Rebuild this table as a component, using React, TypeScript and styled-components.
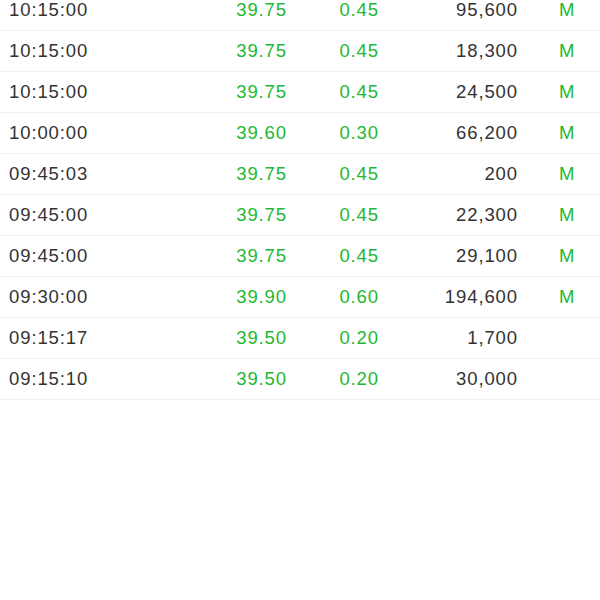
import React from "react";
import styled, { createGlobalStyle } from "styled-components";

const Global = createGlobalStyle`
  html, body { margin: 0; padding: 0; background: #ffffff; }
  body { font-family: "Liberation Sans", Arial, sans-serif; overflow: hidden; }
`;

const List = styled.div`
  display: flex;
  flex-direction: column;
  margin-top: -10px;
`;

const Row = styled.div`
  display: grid;
  grid-template-columns: 200px 87px 92px 139px 1fr;
  align-items: center;
  height: 40px;
  border-bottom: 1px solid #f0f0f0;
  font-size: 18.5px;
  letter-spacing: 0.9px;
`;

const Time = styled.span`
  padding-left: 9px;
  color: #333333;
`;

const Num = styled.span<{ $green?: boolean }>`
  text-align: right;
  color: ${(p) => (p.$green ? "#22b831" : "#333333")};
`;

const Flag = styled.span`
  padding-left: 41px;
  color: #22b831;
`;

const rows = [
  ["10:15:00", "39.75", "0.45", "95,600", "M"],
  ["10:15:00", "39.75", "0.45", "18,300", "M"],
  ["10:15:00", "39.75", "0.45", "24,500", "M"],
  ["10:00:00", "39.60", "0.30", "66,200", "M"],
  ["09:45:03", "39.75", "0.45", "200", "M"],
  ["09:45:00", "39.75", "0.45", "22,300", "M"],
  ["09:45:00", "39.75", "0.45", "29,100", "M"],
  ["09:30:00", "39.90", "0.60", "194,600", "M"],
  ["09:15:17", "39.50", "0.20", "1,700", ""],
  ["09:15:10", "39.50", "0.20", "30,000", ""],
];

export default function App() {
  return (
    <>
      <Global />
      <List>
        {rows.map((r, i) => (
          <Row key={i}>
            <Time>{r[0]}</Time>
            <Num $green>{r[1]}</Num>
            <Num $green>{r[2]}</Num>
            <Num>{r[3]}</Num>
            <Flag>{r[4]}</Flag>
          </Row>
        ))}
      </List>
    </>
  );
}
